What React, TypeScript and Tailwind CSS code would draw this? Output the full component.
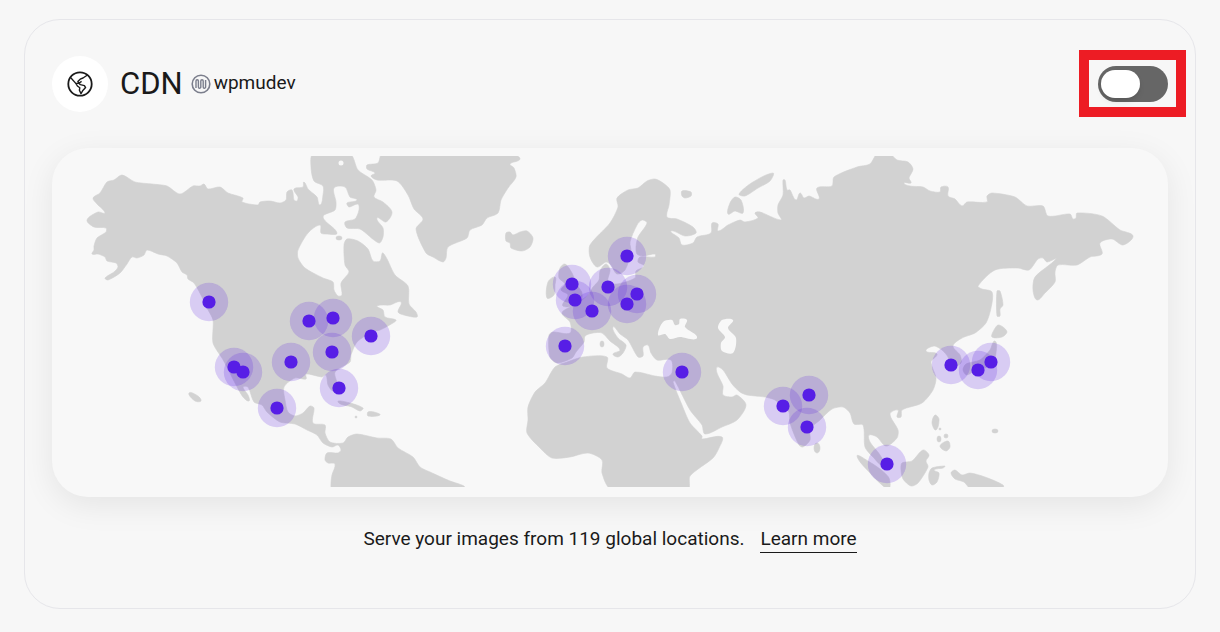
import { useState } from 'react';

type Point = [number, number];

// Coastlines, as flat "x,y x,y ..." lists in map units
const LAND = [
  // North and South America
  '122,175 114,180 107,182 100,193 93,198 97,204 105,213 98,212 87,220 94,227 106,228 106,232 97,238 94,246 94,250 92,254 98,254 105,257 107,261 116,263 118,267 114,272 105,278 108,280 120,273 127,264 132,257 137,258 144,255 147,250 158,254 167,256 177,263 182,272 187,275 188,279 194,283 202,297 207,308 213,320 213,343 222,358 227,367 235,383 243,397 249,401 248,395 243,387 248,387 254,402 262,405 267,412 280,422 295,424 307,430 317,435 323,443 332,447 338,445 341,450 338,453 327,453 325,460 328,463 335,464 332,475 331,483 332,489 464,489 464,486 450,481 430,472 420,467 413,457 398,448 391,439 377,438 357,434 348,437 343,443 330,442 325,433 325,425 313,423 314,408 310,406 303,413 295,416 288,412 285,400 284,387 295,378 306,379 306,374 322,377 326,375 328,385 333,391 338,387 335,372 350,362 351,355 357,342 372,332 380,330 393,323 396,320 385,317 383,310 377,306 390,305 401,302 398,312 404,315 417,317 416,312 409,304 408,286 395,275 383,253 380,261 373,261 368,249 358,241 347,239 344,245 345,265 349,272 341,283 342,295 338,296 334,290 333,282 323,278 305,268 298,258 298,250 308,233 320,225 321,233 326,234 337,233 323,217 335,210 336,202 334,188 345,187 350,197 357,200 347,203 349,207 358,204 359,210 355,219 345,222 347,228 360,229 379,243 383,237 383,228 377,218 386,222 392,212 383,202 374,197 376,190 372,180 358,170 350,154 313,154 311,167 314,181 323,186 323,195 320,205 317,197 308,189 304,182 303,187 294,189 298,197 297,201 294,200 292,190 287,192 286,200 280,203 270,201 260,202 258,205 242,202 243,198 228,193 220,187 208,189 204,184 200,186 193,186 180,194 167,186 152,184 135,182',
  // Greenland
  '382,154 378,163 367,165 367,169 375,173 371,176 377,180 397,181 408,195 414,209 423,219 416,229 426,253 433,257 443,262 446,258 448,247 467,238 470,230 482,225 487,218 498,213 501,200 508,188 516,177 514,168 510,164 520,159 512,154',
  // Iceland
  '506,233 510,232 513,235 520,232 527,231 533,238 530,247 522,251 511,248 510,243 506,241',
  // Eurasia and Africa
  '655,179 663,183 670,190 669,205 667,217 677,219 693,227 696,233 685,236 671,231 679,238 682,245 693,243 697,237 711,233 712,223 718,224 718,231 728,225 740,220 745,222 758,218 755,213 760,212 781,220 778,213 778,205 783,195 783,180 785,180 787,190 790,190 796,200 800,193 804,198 809,196 819,199 817,188 832,186 834,177 857,167 870,164 877,154 890,154 897,160 908,162 913,169 909,178 911,183 904,183 910,186 923,187 930,191 940,192 941,187 948,187 948,196 955,199 962,206 967,202 987,202 987,196 992,193 1015,197 1027,206 1043,206 1048,216 1070,214 1073,219 1076,218 1077,213 1102,216 1120,230 1133,236 1123,245 1112,239 1100,243 1102,254 1090,257 1077,265 1058,265 1055,272 1055,282 1045,293 1037,300 1033,290 1035,277 1056,259 1047,262 1043,258 1038,259 1029,270 1018,268 995,270 978,286 982,289 992,292 991,308 986,323 975,333 962,338 953,346 960,355 961,363 951,367 948,357 942,350 934,346 926,351 937,354 931,362 936,378 933,390 922,403 902,410 901,417 897,417 898,410 890,414 898,430 897,438 886,446 877,437 869,435 870,442 880,455 884,466 873,457 865,447 863,425 854,424 850,413 843,407 832,409 820,420 810,429 810,440 803,447 799,445 790,423 789,412 783,407 775,400 765,397 747,395 740,392 732,384 723,370 717,367 717,373 723,386 723,395 732,397 737,395 746,405 737,420 722,427 705,434 702,425 690,410 675,381 673,382 682,405 690,423 702,436 702,439 722,437 719,448 713,458 690,476 688,489 611,489 602,473 602,460 588,453 570,457 552,458 540,448 527,433 528,420 528,407 535,392 545,383 555,367 567,362 583,357 607,357 607,368 622,374 630,378 635,372 655,376 667,377 672,373 671,360 657,360 651,353 648,345 643,347 643,356 638,357 628,340 620,334 613,327 618,338 626,345 623,353 618,357 613,354 620,350 610,341 602,333 593,333 585,336 584,342 576,352 572,358 557,363 550,357 549,335 553,332 570,333 570,322 562,313 572,306 587,296 593,287 599,280 600,271 606,264 610,270 608,282 617,284 635,278 636,271 644,266 638,262 640,257 655,257 655,254 643,256 637,254 636,247 638,237 647,223 642,220 637,225 630,242 631,252 625,270 617,274 611,265 606,262 597,267 590,257 590,245 610,223 618,207 617,198 628,190 638,188 647,181',
  // Britain and Ireland
  '565,264 560,268 559,278 565,284 561,290 568,295 563,306 580,303 582,293 577,285 572,273',
  '555,277 548,282 547,298 554,295 555,285',
  // Svalbard, Novaya Zemlya
  '682,191 691,192 691,196 685,198 682,196',
  '773,173 770,181 758,188 745,196 739,194 753,182',
  '735,197 730,203 728,214 735,211 743,213 741,200',
  // Sakhalin and Japan
  '997,291 1000,291 1003,305 1000,309 1000,316 997,316',
  '998,325 1003,327 1007,332 1002,337 992,337 994,330',
  '995,341 996,353 993,363 985,368 978,368 967,375 963,370 966,364 980,360 990,350',
  // Philippines
  '935,415 939,419 936,430 932,423',
  '940,446 948,441 950,447 946,451',
  // Sumatra, Borneo, Sulawesi, New Guinea
  '857,456 868,461 880,469 889,478 889,489 882,485 870,473',
  '902,463 912,461 923,450 929,455 926,461 928,467 918,483 911,486 903,479 901,470',
  '932,468 945,466 943,468 934,470 939,473 937,482 932,485 929,480 929,473',
  '951,473 955,470 962,475 970,473 985,477 1003,485 1003,489 971,489 964,482 955,479',
  // Cuba, Hispaniola, Hawaii
  '338,402 350,403 363,408 360,411 352,407',
  '368,412 374,412 380,415 368,416',
  '189,393 198,396 201,401 195,401',
];

// Black Sea and Caspian Sea
const SEAS = [
  '658,335 663,322 672,320 675,325 679,324 680,319 687,320 685,327 697,338 680,337 670,339 665,334',
  '722,320 733,320 728,328 736,338 733,353 722,351 721,343 725,337 718,328',
];

const ISLETS = [
  { cx: 339, cy: 238, rx: 3, ry: 2 },
  { cx: 602, cy: 344, rx: 2, ry: 3 },
  { cx: 817, cy: 448, rx: 3, ry: 5 },
  { cx: 939, cy: 439, rx: 2, ry: 3 },
  { cx: 946, cy: 436, rx: 2, ry: 2 },
  { cx: 940, cy: 429, rx: 1, ry: 1 },
  { cx: 995, cy: 431, rx: 3, ry: 2 },
  { cx: 356, cy: 417, rx: 1, ry: 1 },
];

const LOCATIONS: Point[] = [
  [209, 302], [309, 321], [333, 318], [371, 336], [332, 352], [291, 362],
  [234, 367], [243, 372], [277, 408], [339, 388], [627, 256], [572, 284],
  [575, 300], [608, 287], [637, 294], [627, 304], [592, 311], [565, 346],
  [682, 372], [783, 406], [809, 395], [807, 427], [887, 464], [951, 365],
  [978, 370], [991, 362],
];

// Closed curve through every point of the outline. Handles follow the
// direction between the two neighbours and scale with the segment's length.
function toPath(outline: string) {
  const pts = outline.split(' ').map((p) => p.split(',').map(Number) as Point);
  const at = (i: number) => pts[(i + pts.length) % pts.length];
  const direction = (i: number): Point => {
    const dx = at(i + 1)[0] - at(i - 1)[0];
    const dy = at(i + 1)[1] - at(i - 1)[1];
    const length = Math.hypot(dx, dy) || 1;
    return [dx / length, dy / length];
  };
  const curves = pts.map((p, i) => {
    const next = at(i + 1);
    const handle = Math.hypot(next[0] - p[0], next[1] - p[1]) / 4;
    const d1 = direction(i);
    const d2 = direction(i + 1);
    const c1 = [p[0] + d1[0] * handle, p[1] + d1[1] * handle];
    const c2 = [next[0] - d2[0] * handle, next[1] - d2[1] * handle];
    return `C${c1.join(' ')} ${c2.join(' ')} ${next.join(' ')}`;
  });
  return `M${pts[0].join(' ')}${curves.join('')}Z`;
}

function WorldMap() {
  return (
    <svg viewBox="52 156 1116 331" className="block w-full" role="img" aria-label="CDN locations">
      <g fill="#d2d2d2" stroke="#d2d2d2" strokeWidth="0.6" strokeLinejoin="round">
        {LAND.map((outline) => (
          <path key={outline} d={toPath(outline)} />
        ))}
        {ISLETS.map((islet) => (
          <ellipse key={`${islet.cx}-${islet.cy}`} {...islet} />
        ))}
      </g>
      <g fill="#f8f8f8">
        {SEAS.map((outline) => (
          <path key={outline} d={toPath(outline)} />
        ))}
        <circle cx="341" cy="163" r="2.5" />
      </g>
      {LOCATIONS.map(([x, y]) => (
        <circle key={`halo-${x}-${y}`} cx={x} cy={y} r="19.2" fill="#581cdf" fillOpacity="0.2" />
      ))}
      {LOCATIONS.map(([x, y]) => (
        <circle key={`dot-${x}-${y}`} cx={x} cy={y} r="6.6" fill="#571ee6" />
      ))}
    </svg>
  );
}

function GlobeIcon() {
  return (
    <svg viewBox="0 0 26 26" className="size-[26px]" fill="none" stroke="#1a1a1a" strokeWidth="1.8" strokeLinejoin="round" aria-hidden="true">
      <circle cx="13" cy="13" r="11.7" />
      <g strokeWidth="1.4">
        <path d="M3.8 6.8L9 12.6" />
        <path d="M20.5 4L16 7l-2.8 1.2-2.4 2.2 1.4 1.6 2.4-1.6" />
        <path d="M9 12.6l2.4-.6 2 1.6 4 1 1.2 2-3 3.2-1.6 2.8-1.6-3.4.4-2.4-2.4-1.8z" />
      </g>
    </svg>
  );
}

function WpmudevIcon() {
  return (
    <svg viewBox="0 0 20 20" className="size-5" fill="none" stroke="#7b7e8c" aria-hidden="true">
      <circle cx="10" cy="10" r="8.8" strokeWidth="1.6" />
      <path d="M5 14V7a1.2 1.2 0 0 1 2.4 0v6a1.2 1.2 0 0 0 2.4 0V7a1.2 1.2 0 0 1 2.4 0v6a1.2 1.2 0 0 0 2.4 0V6" strokeWidth="1.4" />
    </svg>
  );
}

export default function App() {
  const [enabled, setEnabled] = useState(false);

  return (
    <main className="min-h-screen bg-[#f7f7f7] px-6 pt-[19px] pb-5 font-[Roboto,sans-serif] text-[#1a1a1a]">
      <section className="rounded-[36px] border border-[#e6e6ea] px-[27px] pt-9 pb-[55px]">
        <header className="flex items-center justify-between">
          <div className="flex items-center">
            <span className="mr-3 flex size-14 items-center justify-center rounded-full bg-white">
              <GlobeIcon />
            </span>
            <h2 className="mr-2 text-[31px] leading-10">CDN</h2>
            <span className="flex items-center gap-[3px] text-[19px] leading-7">
              <WpmudevIcon />
              <span className="pb-0.5">wpmudev</span>
            </span>
          </div>
          <div className="relative flex">
            <button
              type="button"
              role="switch"
              aria-checked={enabled}
              aria-label="CDN"
              onClick={() => setEnabled(!enabled)}
              className={`flex h-9 w-[70px] items-center rounded-full px-[3px] ${enabled ? 'justify-end bg-[#571ee6]' : 'bg-[#666666]'}`}
            >
              <span className="h-7 w-[39px] rounded-full bg-white shadow-md" />
            </button>
            <span className="pointer-events-none absolute -top-4 -right-[18px] -bottom-[15px] -left-[19px] border-10 border-[#ed1c24]" />
          </div>
        </header>

        <div className="mt-9 rounded-[36px] bg-[#f8f8f8] pt-2 pb-[10px] shadow-[0_8px_32px_rgba(0,0,0,0.08)]">
          <WorldMap />
        </div>

        <p className="mt-7 flex justify-center gap-4 text-[19px] leading-[27px]">
          <span>Serve your images from 119 global locations.</span>
          <a href="#learn-more" className="border-b border-[#1a1a1a]">
            Learn more
          </a>
        </p>
      </section>
    </main>
  );
}
